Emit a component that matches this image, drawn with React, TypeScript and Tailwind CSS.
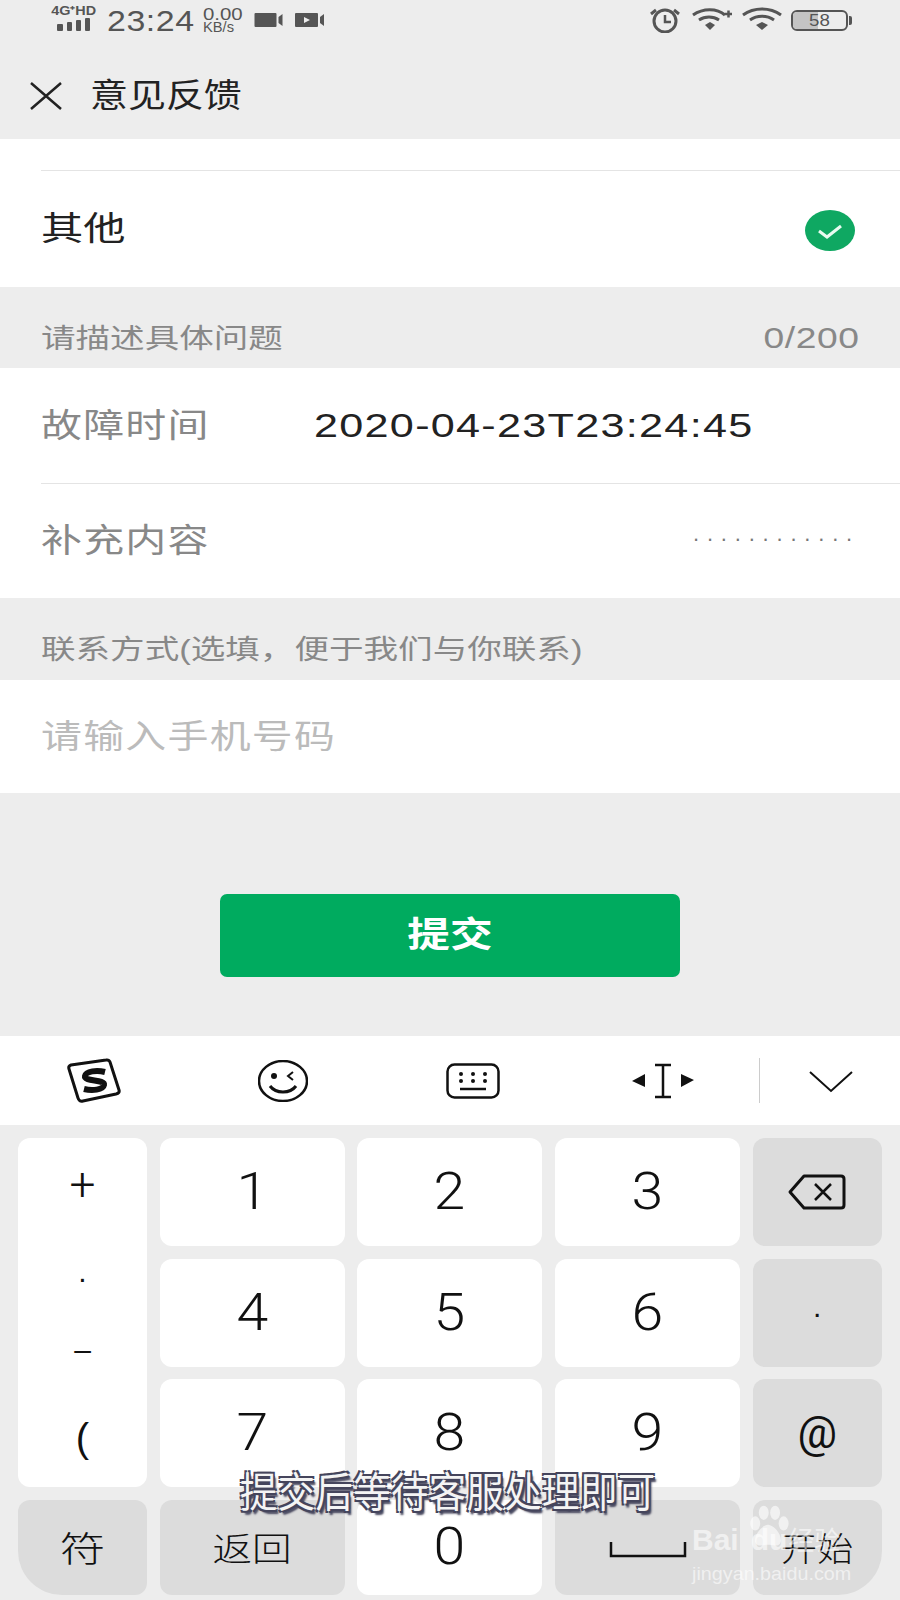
const font = "font-['Liberation_Sans','Noto_Sans_CJK_SC',sans-serif]";

function StatusBar() {
  return (
    <div className="h-[54px] flex items-start justify-between pl-[50px] pr-[48px] pt-[5px] text-[#555]">
      <div className="flex items-start">
        <div className="w-[47px] flex flex-col items-center">
          <span className="text-[12px] leading-[12px] font-bold whitespace-nowrap scale-x-[1.2]">4G⁺HD</span>
          <div className="flex items-end gap-[4px] mt-[1px]">
            <span className="w-[6px] h-[7px] rounded-[1px] bg-[#555]" />
            <span className="w-[5px] h-[9px] rounded-[1px] bg-[#555]" />
            <span className="w-[5px] h-[11px] rounded-[1px] bg-[#555]" />
            <span className="w-[5px] h-[13px] rounded-[1px] bg-[#555]" />
          </div>
        </div>
        <span className="ml-[10px] -mt-[1px] w-[95px] text-[30px] leading-[34px] tracking-[0.5px] scale-x-[1.13] origin-left">23:24</span>
        <div className="ml-[1px] w-[47px] flex flex-col leading-[11px] mt-[2px]">
          <span className="text-[17px] leading-[15px] scale-x-[1.2] origin-left">0.00</span>
          <span className="text-[14px] leading-[11px] scale-x-[1.05] origin-left">KB/s</span>
        </div>
        <svg className="ml-[4px] mt-[7px]" width="29" height="16" viewBox="0 0 28 16">
          <rect x="0" y="1" width="22" height="14" rx="1" fill="#555" />
          <path d="M24 5l4-3v12l-4-3z" fill="#555" />
        </svg>
        <svg className="ml-[12px] mt-[7px]" width="29" height="16" viewBox="0 0 29 16">
          <rect x="0" y="1" width="23" height="14" rx="1" fill="#555" />
          <path d="M9 5l6 3-6 3z" fill="#eee" />
          <path d="M25 5l4-3v12l-4-3z" fill="#555" />
        </svg>
      </div>
      <div className="flex items-start -mt-[1px]">
        <svg className="mt-[3px]" width="30" height="26" viewBox="0 0 30 26" fill="none" stroke="#555" strokeWidth="3">
          <circle cx="15" cy="14" r="11" />
          <path d="M15 8v7h6" strokeWidth="2.5" />
          <path d="M1 7l5-4M29 7l-5-4" />
        </svg>
        <svg className="ml-[12px] mt-[3px]" width="41" height="24" viewBox="0 0 41 24" fill="none" stroke="#555" strokeWidth="3">
          <path d="M1 8c10-7 24-7 32 0M7 13c6-4 14-4 20 0" />
          <path d="M13 18l5-3 5 3-5 5z" fill="#555" stroke="none" />
          <path d="M33 7h7M36.500 3.500v7" strokeWidth="2.500" />
        </svg>
        <svg className="ml-[9px] mt-[3px]" width="40" height="24" viewBox="0 0 40 24" fill="none" stroke="#555" strokeWidth="3">
          <path d="M1 8c11-8 27-8 38 0M8 13c7-5 17-5 24 0" />
          <path d="M14 18l6-3 6 3-6 5z" fill="#555" stroke="none" />
        </svg>
        <div className="ml-[9px] mt-[6px] flex items-center">
          <div className="relative w-[57px] h-[21px] rounded-[6px] border-2 border-[#555] overflow-hidden flex items-center justify-center">
            <div className="absolute left-0 top-0 bottom-0 w-[25px] bg-[#c4c4c4]" />
            <span className="relative text-[17px] leading-none scale-x-[1.1]">58</span>
          </div>
          <span className="ml-[1px] w-[3px] h-[9px] bg-[#555] rounded-r-[2px]" />
        </div>
      </div>
    </div>
  );
}

function SectionLabel({ left, right }: { left: string; right?: string }) {
  return (
    <div className="h-[81px] pt-[32px] pl-[41px] pr-[40px] flex items-start justify-between text-[#888] text-[27px] leading-[38px]">
      <span className="text-[27px] mt-[1px] whitespace-nowrap scale-x-[1.28] origin-left">{left}</span>
      {right && <span className="text-[30px] tracking-[0.5px] scale-x-[1.24] origin-right">{right}</span>}
    </div>
  );
}

function Key({ children, gray, className }: { children?: React.ReactNode; gray?: boolean; className?: string }) {
  return (
    <div
      className={`flex items-center justify-center text-[#111] rounded-[12px] ${gray ? "bg-[#dcdcdc]" : "bg-white"} ${className ?? ""}`}
    >
      {children}
    </div>
  );
}

const num = "font-['Roboto',sans-serif] text-[52px] leading-none font-light scale-x-[1.1]";

export default function App() {
  return (
    <div className={`relative w-[900px] h-[1600px] overflow-hidden bg-[#ededed] ${font}`}>
      <StatusBar />
      <div className="h-[85px] flex items-center pl-[30px] -mt-[1px]">
        <svg width="32" height="28" viewBox="0 0 32 28" fill="none" stroke="#222" strokeWidth="2.500">
          <path d="M1 1l30 26M31 1L1 27" />
        </svg>
        <span className="ml-[28px] text-[33px] leading-none font-normal text-[#222] scale-x-[1.15] origin-left -mt-[1px]">意见反馈</span>
      </div>

      <div className="bg-white h-[148px] mt-[1px] pl-[41px]">
        <div className="h-[32px] border-b border-[#e4e4e4]" />
        <div className="h-[116px] flex items-center justify-between pr-[45px]">
          <span className="text-[33px] text-[#222] scale-x-[1.28] origin-left">其他</span>
          <svg className="mt-[2px]" width="50" height="41" viewBox="0 0 50 41">
            <ellipse cx="25" cy="20.500" rx="25" ry="20.500" fill="#0fa862" />
            <path d="M14 21l8 6 14-11" fill="none" stroke="#e8fbf0" strokeWidth="3" />
          </svg>
        </div>
      </div>

      <SectionLabel left="请描述具体问题" right="0/200" />

      <div className="bg-white h-[230px] pl-[41px]">
        <div className="h-[116px] flex items-center border-b border-[#e4e4e4]">
          <span className="w-[273px] text-[33px] tracking-[1px] text-[#888] scale-x-[1.24] origin-left">故障时间</span>
          <span className="text-[34px] text-[#222] tracking-[1px] scale-x-[1.27] origin-left whitespace-nowrap">2020-04-23T23:24:45</span>
        </div>
        <div className="h-[114px] flex items-center justify-between pr-[40px]">
          <span className="text-[33px] tracking-[1px] text-[#888] scale-x-[1.24] origin-left">补充内容</span>
          <span className="text-[22px] leading-none tracking-[7.800px] text-[#777] -mt-[14px]">............</span>
        </div>
      </div>

      <SectionLabel left="联系方式(选填，便于我们与你联系)" />

      <div className="bg-white h-[113px] pl-[41px] flex items-center mt-[1px]">
        <span className="text-[33px] tracking-[1px] text-[#bbb] scale-x-[1.24] origin-left">请输入手机号码</span>
      </div>

      <div className="h-[243px] flex justify-center pt-[101px]">
        <div className="w-[460px] h-[83px] rounded-[7px] bg-[#00ab5f] flex items-center justify-center text-white text-[35px] font-bold">
          <span className="scale-x-[1.22]">提交</span>
        </div>
      </div>

      <div className="h-[89px] bg-white flex items-center">
        <div className="w-[188px] flex justify-center">
          <svg width="56" height="46" viewBox="0 0 56 46">
            <path d="M5 7L40 2Q43 1.500 44 4L53 32Q54 35 50 36L17 43Q13 44 12 40L3 11Q2 8 5 7z" fill="#fff" stroke="#111" strokeWidth="3" />
            <path d="M39 14c-8-2-19-1-20 4-1 6 20 3 19 9-1 5-12 6-20 4" fill="none" stroke="#111" strokeWidth="6" />
          </svg>
        </div>
        <div className="w-[190px] flex justify-center">
          <svg width="50" height="42" viewBox="0 0 50 42" fill="none" stroke="#111" strokeWidth="2.500">
            <ellipse cx="25" cy="21" rx="24" ry="20" />
            <circle cx="16" cy="16" r="3" fill="#111" stroke="none" />
            <path d="M35 12l-5 4 5 4" strokeWidth="2" />
            <path d="M12 26c6 8 20 8 26 0" strokeWidth="3" />
          </svg>
        </div>
        <div className="w-[190px] flex justify-center">
          <svg width="54" height="36" viewBox="0 0 54 36" fill="none" stroke="#111" strokeWidth="2.500">
            <rect x="1.500" y="1.500" width="51" height="33" rx="7" />
            <path d="M14 26h26" />
            <g fill="#111" stroke="none">
              <circle cx="15" cy="11" r="2" /><circle cx="27" cy="11" r="2" /><circle cx="39" cy="11" r="2" />
              <circle cx="15" cy="18" r="2" /><circle cx="27" cy="18" r="2" /><circle cx="39" cy="18" r="2" />
            </g>
          </svg>
        </div>
        <div className="w-[190px] flex justify-center">
          <svg width="64" height="36" viewBox="0 0 64 36">
            <path d="M14 11v13L1 18zM50 11v13l13-7z" fill="#111" />
            <path d="M24 2h16M24 34h16M32 2v32" fill="none" stroke="#111" strokeWidth="2.500" />
          </svg>
        </div>
        <div className="h-[45px] w-px bg-[#ccc] ml-[1px]" />
        <div className="flex-1 flex justify-center pt-[2px] pl-[1px]">
          <svg width="44" height="22" viewBox="0 0 44 22" fill="none" stroke="#111" strokeWidth="2">
            <path d="M1 1l21 19L43 1" />
          </svg>
        </div>
      </div>

      <div className="grid grid-cols-[129px_185px_185px_185px_129px] grid-rows-[108px_108px_108px_95px] gap-x-[12.700px] gap-y-[12.500px] pl-[18px] pt-[13px]">
        <div className="row-span-3 bg-white rounded-[12px] flex flex-col items-center text-[#111] leading-none">
          <span className="mt-[23px] h-[44px] font-['Roboto',sans-serif] font-light text-[46px]">+</span>
          <span className="mt-[52px] h-[30px] text-[30px]">.</span>
          <span className="mt-[48px] h-[30px] text-[30px]">–</span>
          <span className="mt-[53px] text-[40px]">(</span>
        </div>
        <Key><span className={num}>1</span></Key>
        <Key><span className={num}>2</span></Key>
        <Key><span className={num}>3</span></Key>
        <Key gray>
          <svg width="58" height="36" viewBox="0 0 58 36" fill="none" stroke="#111" strokeWidth="3" strokeLinejoin="round">
            <path d="M16 2h37c2 0 3 1 3 3v26c0 2-1 3-3 3H16L2 18z" />
            <path d="M27 10l16 16M43 10L27 26" strokeWidth="2.500" />
          </svg>
        </Key>
        <Key><span className={num}>4</span></Key>
        <Key><span className={num}>5</span></Key>
        <Key><span className={num}>6</span></Key>
        <Key gray><span className="text-[30px] leading-none -mt-[12px]">.</span></Key>
        <Key><span className={num}>7</span></Key>
        <Key><span className={num}>8</span></Key>
        <Key><span className={num}>9</span></Key>
        <Key gray><span className="font-['Roboto',sans-serif] text-[44px] leading-none">@</span></Key>
        <Key gray className="rounded-bl-[44px]"><span className="text-[35px] font-light scale-x-[1.3] mt-[6px]">符</span></Key>
        <Key gray><span className="text-[33px] font-light scale-x-[1.2] mt-[6px]">返回</span></Key>
        <Key><span className={num}>0</span></Key>
        <Key gray>
          <svg className="mt-[6px]" width="78" height="16" viewBox="0 0 78 16" fill="none" stroke="#111" strokeWidth="2.500">
            <path d="M2 0v14h74V0" />
          </svg>
        </Key>
        <Key gray className="rounded-br-[44px]"><span className="text-[33px] font-light scale-x-[1.1] mt-[6px]">开始</span></Key>
      </div>

      {/* watermark */}
      <div className="absolute left-[692px] top-[1505px] w-[160px] h-[78px] text-white/60 leading-none">
        <svg className="absolute left-[52px] top-0" width="48" height="44" viewBox="0 0 64 62" fill="#fff" fillOpacity="0.6">
          <ellipse cx="14" cy="26" rx="7" ry="10" />
          <ellipse cx="26" cy="11" rx="7" ry="10" />
          <ellipse cx="42" cy="11" rx="7" ry="10" />
          <ellipse cx="54" cy="26" rx="7" ry="10" />
          <path d="M32 28c8 0 20 14 18 24-2 8-12 4-18 4s-16 4-18-4c-2-10 10-24 18-24z" />
        </svg>
        <div className="absolute left-0 top-[20px] flex items-baseline text-[30px] font-bold">
          <span>Bai</span><span className="ml-[12px]">du</span><span className="ml-[1px] text-[26px] font-normal">经验</span>
        </div>
        <div className="absolute left-0 top-[59px] text-[19px] whitespace-nowrap scale-x-[1.04] origin-left">jingyan.baidu.com</div>
      </div>

      {/* subtitle */}
      <div className="absolute left-[240px] top-[1467px] text-[41px] leading-[52px] text-[#f4f4f4] whitespace-nowrap tracking-[0.5px] scale-x-[0.91] origin-left [text-shadow:-2px_-2px_0_#45455c,2px_-2px_0_#45455c,-2px_2px_0_#45455c,2px_2px_0_#45455c,3px_4px_2px_#45455c]">
        提交后等待客服处理即可
      </div>
    </div>
  );
}
